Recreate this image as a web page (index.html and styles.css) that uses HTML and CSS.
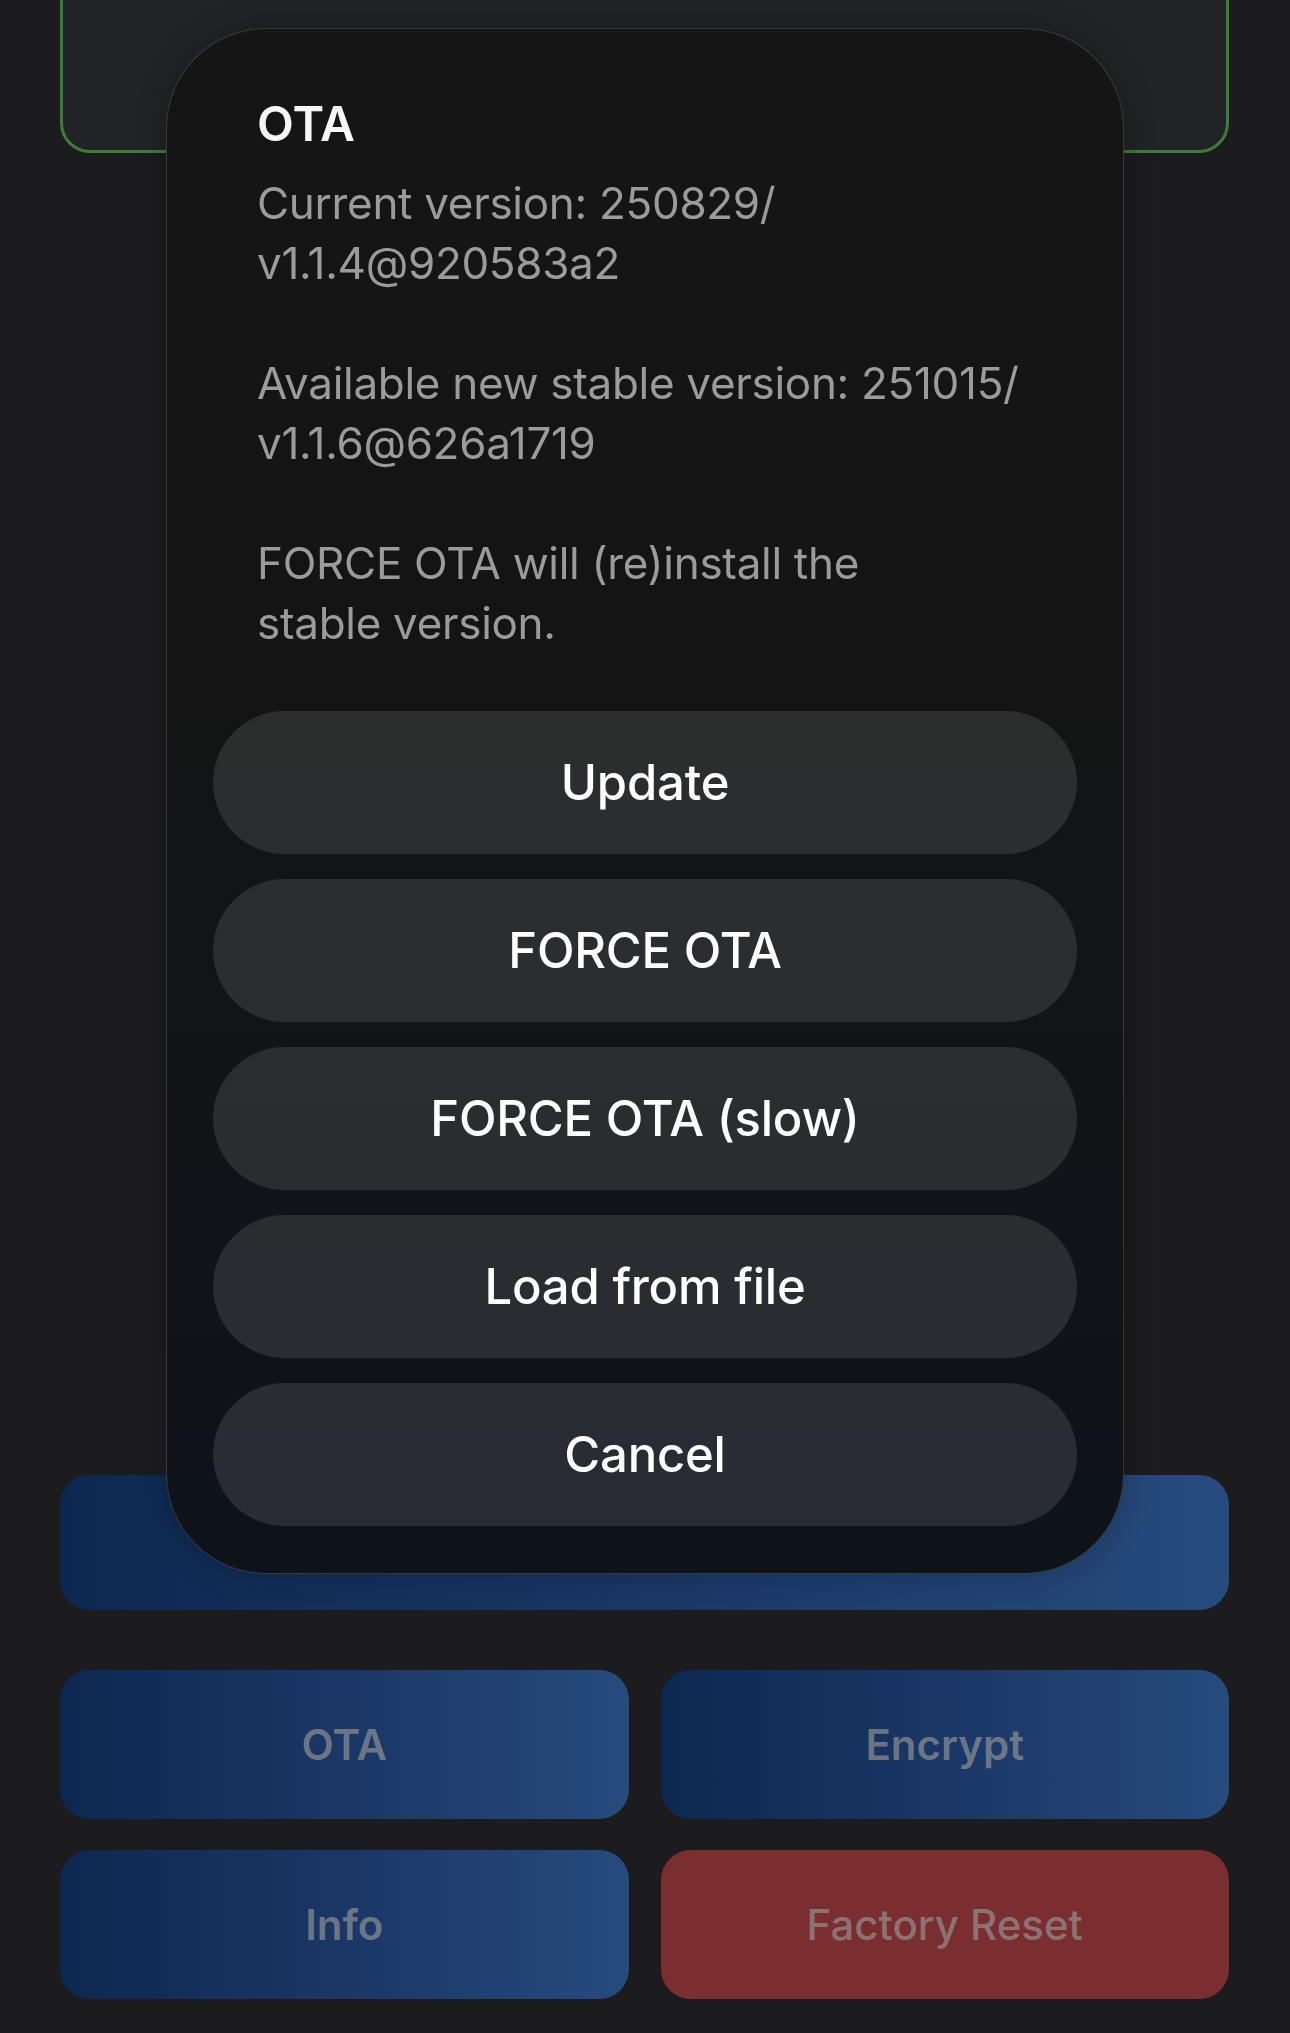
FILE: index.html
```html
<!DOCTYPE html>
<html lang="en">
<head>
<meta charset="utf-8">
<title>OTA</title>
<link rel="stylesheet" href="styles.css">
</head>
<body>
  <main class="page">
    <section class="status-card"></section>

    <button class="action action-wide" type="button"></button>

    <div class="action-grid">
      <button class="action" type="button">OTA</button>
      <button class="action" type="button">Encrypt</button>
      <button class="action" type="button">Info</button>
      <button class="action action-danger" type="button">Factory Reset</button>
    </div>
  </main>

  <div class="sheet" role="dialog" aria-labelledby="sheet-title">
    <div class="sheet-text">
      <h2 class="sheet-title" id="sheet-title">OTA</h2>
      <p class="sheet-body">Current version: 250829/<br>v1.1.4@920583a2</p>
      <p class="sheet-body">Available new stable version: 251015/<br>v1.1.6@626a1719</p>
      <p class="sheet-body">FORCE OTA will (re)install the<br>stable version.</p>
    </div>
    <div class="sheet-actions">
      <button class="sheet-btn" type="button">Update</button>
      <button class="sheet-btn" type="button">FORCE OTA</button>
      <button class="sheet-btn" type="button">FORCE OTA (slow)</button>
      <button class="sheet-btn" type="button">Load from file</button>
      <button class="sheet-btn" type="button">Cancel</button>
    </div>
  </div>
</body>
</html>
```
FILE: styles.css
```css
* {
  box-sizing: border-box;
}

html, body {
  margin: 0;
  padding: 0;
}

body {
  background: #1c1c1e;
  font-family: Inter, "Noto Sans", "Liberation Sans", sans-serif;
  color: #fff;
  width: 1290px;
  height: 2033px;
  overflow: hidden;
}

.page {
  padding: 0 61px 0 60px;
  display: flex;
  flex-direction: column;
}

.status-card {
  margin-top: -60px;
  height: 213px;
  background: #222326;
  border: 3px solid #3d7d37;
  border-radius: 30px;
}

button {
  font-family: inherit;
  border: none;
  cursor: pointer;
}

.action {
  height: 149px;
  border-radius: 30px;
  background: linear-gradient(90deg, #0d2850 0%, #1a3766 50%, #264b7d 100%);
  color: rgba(150, 150, 150, 0.68);
  font-size: 42px;
  font-weight: 600;
}

.action-wide {
  height: 135px;
  margin-top: 1322px;
  width: 100%;
}

.action-grid {
  margin-top: 60px;
  display: grid;
  grid-template-columns: 1fr 1fr;
  column-gap: 32px;
  row-gap: 31px;
}

.action-danger {
  background: #7a2e2f;
  font-weight: 500;
}

/* Modal sheet */
.sheet {
  position: fixed;
  left: 166px;
  top: 28px;
  width: 958px;
  height: 1546px;
  border-radius: 100px;
  border: 1.5px solid rgba(255, 255, 255, 0.16);
  background: linear-gradient(180deg, #151515 0%, #141414 40%, #0e131a 100%);
  box-shadow: 0 0 30px rgba(0, 0, 0, 0.25);
  padding: 66px 46px 45px;
  display: flex;
  flex-direction: column;
}

.sheet-text {
  padding: 0 44px;
}

.sheet-title {
  margin: 0 0 20px;
  font-size: 48px;
  line-height: 58px;
  font-weight: 600;
  color: #f6f6f6;
}

.sheet-body {
  margin: 0 0 60px;
  font-size: 44px;
  line-height: 60px;
  font-weight: 400;
  letter-spacing: -0.3px;
  color: #9b9b9b;
  white-space: nowrap;
}

.sheet-body:last-child {
  margin-bottom: 0;
}

.sheet-actions {
  margin-top: 58px;
  display: flex;
  flex-direction: column;
  gap: 25px;
}

.sheet-btn {
  height: 143px;
  width: 100%;
  border-radius: 72px;
  background: rgba(255, 255, 255, 0.11);
  color: #fff;
  font-size: 49px;
  font-weight: 500;
  letter-spacing: -0.2px;
  display: flex;
  align-items: center;
  justify-content: center;
}
```
